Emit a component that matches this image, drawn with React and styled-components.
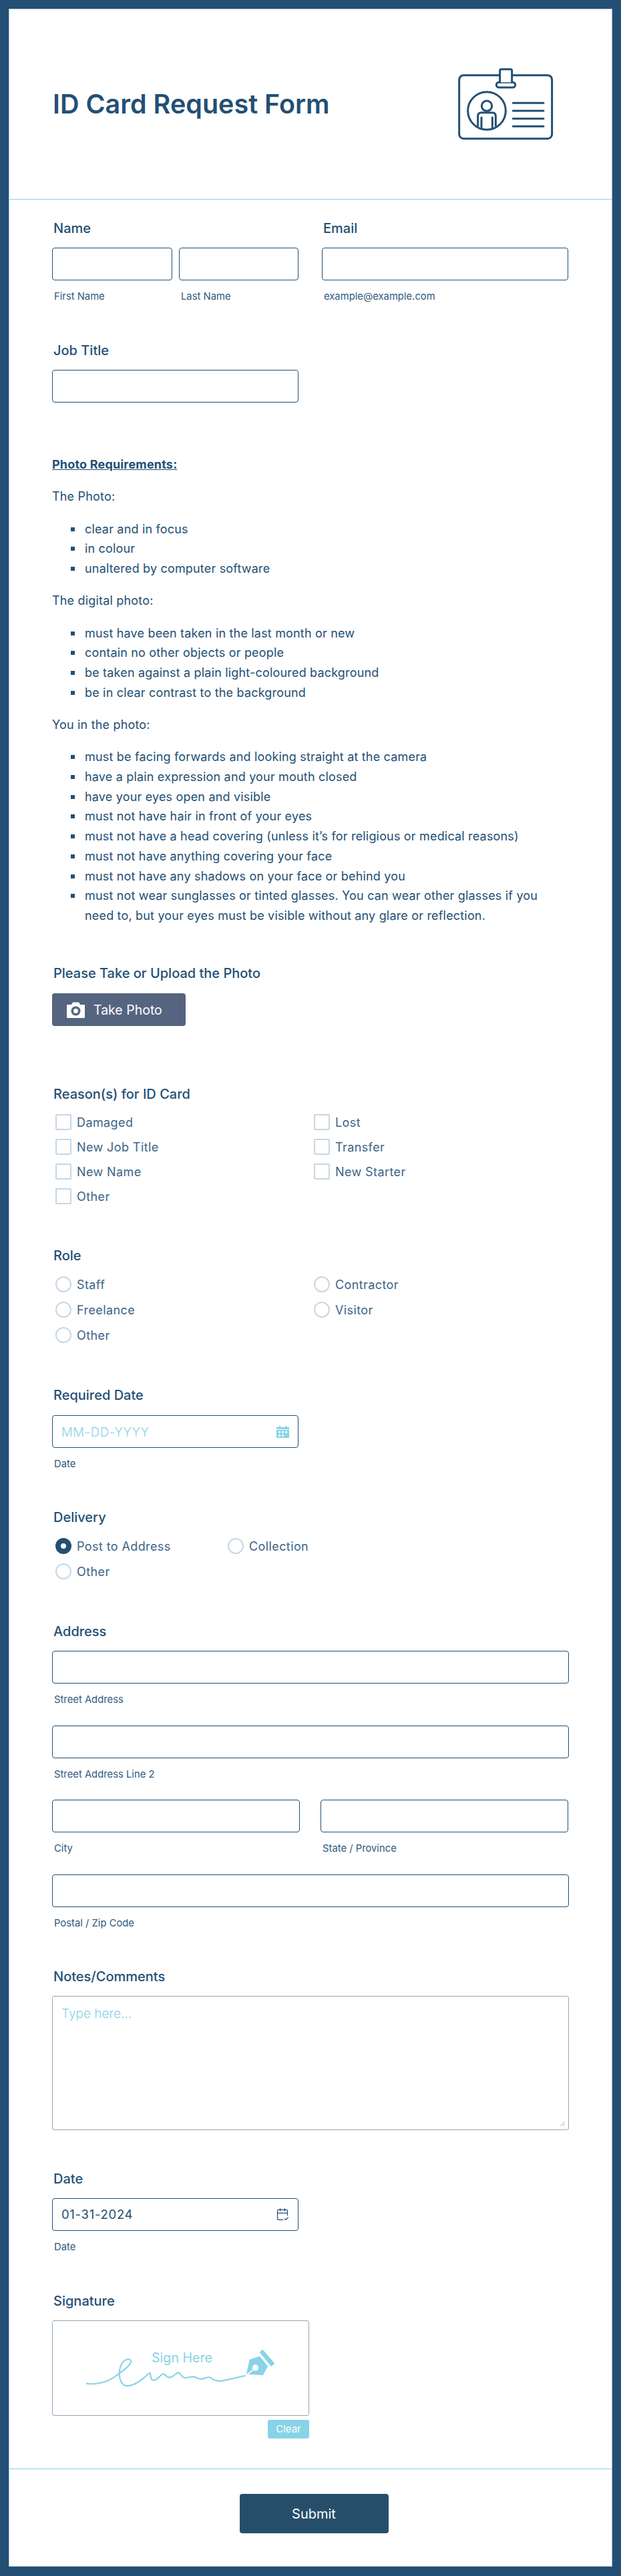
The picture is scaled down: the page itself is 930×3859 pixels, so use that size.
import React from 'react';
import styled, { createGlobalStyle } from 'styled-components';
import { CalendarCheck2 } from 'lucide-react';

const NAVY = '#234f74';
const SKY = '#88d3e7';

const Global = createGlobalStyle`
  html, body { margin: 0; padding: 0; }
  body { background: ${NAVY}; font-family: 'Inter', sans-serif; color: ${NAVY}; }
  * { box-sizing: border-box; }
`;

const Page = styled.div`
  width: 930px;
  height: 3859px;
  padding: 13px 13px 14px;
`;

const Card = styled.main`
  height: 100%;
  background: #fff;
  border: 1px solid #a9c6da;
  display: flex;
  flex-direction: column;
`;

const Header = styled.header`
  height: 285px;
  flex-shrink: 0;
  padding: 0 56px 0 65px;
  display: flex;
  align-items: center;
  justify-content: space-between;
  border-bottom: 1px solid ${SKY};
`;

const Title = styled.h1`
  margin: 0;
  font-size: 39.5px;
  font-weight: 600;
  color: ${NAVY};
`;

const Form = styled.div`
  flex: 1;
  padding: 0 64px;
`;

const Field = styled.section`
  margin-top: ${p => p.$top}px;
  width: ${p => p.$width ? p.$width + 'px' : 'auto'};
`;

const Label = styled.div`
  font-size: 20px;
  font-weight: 500;
  line-height: 22px;
  padding-left: 2px;
  color: ${NAVY};
  margin-bottom: ${p => p.$gap ?? 18}px;
`;

const Row = styled.div`
  display: grid;
  grid-template-columns: ${p => p.$cols};
  column-gap: ${p => p.$gap}px;
`;

const Input = styled.div`
  height: ${p => p.$h ?? 49}px;
  border: 1px solid ${NAVY};
  border-radius: 4px;
  background: #fff;
`;

const Sub = styled.div`
  font-size: 14.8px;
  line-height: 16px;
  margin-top: 16px;
  padding-left: 3px;
  color: #2f5a80;
`;

const StackedAddress = styled.div`
  display: flex;
  flex-direction: column;
  gap: 30.5px;
`;

const Rich = styled.div`
  font-size: 18px;
  line-height: 29.7px;
  letter-spacing: 0.18px;
  color: ${NAVY};
  p { margin: 0 0 18.6px; }
  u { font-weight: 700; }
  ul { margin: 0 0 18.6px; padding: 0 0 0 49px; list-style: none; }
  li { position: relative; }
  li::before {
    content: '';
    position: absolute;
    left: -21px;
    top: 12px;
    width: 6px;
    height: 6px;
    background: ${NAVY};
  }
`;

const PhotoButton = styled.button`
  width: 200px;
  height: 49px;
  border: none;
  border-radius: 4px;
  background: #56657f;
  color: #fff;
  padding: 0 0 0 22px;
  display: flex;
  align-items: center;
  gap: 13px;
  font: 400 19.5px 'Inter', sans-serif;
`;

const Options = styled.div`
  display: grid;
  grid-template-columns: ${p => p.$cols ?? '387px 1fr'};
  row-gap: ${p => p.$rowGap}px;
  padding-left: 5px;
`;

const Option = styled.div`
  display: flex;
  align-items: center;
  gap: 8px;
  height: 24px;
  font-size: 18px;
  letter-spacing: 0.4px;
  color: #3c6488;
`;

const Check = styled.span`
  width: 24px;
  height: 24px;
  border: 2px solid #c8d6e3;
  border-radius: 2px;
  flex-shrink: 0;
`;

const Radio = styled.span`
  width: 24px;
  height: 24px;
  border-radius: 50%;
  border: ${p => p.$on ? `8px solid ${NAVY}` : '2px solid #c8d6e3'};
  flex-shrink: 0;
`;

const DateBox = styled(Input)`
  display: flex;
  align-items: center;
  justify-content: space-between;
  padding: 0 13px;
  font-size: 18.5px;
  letter-spacing: 0.7px;
  color: ${p => p.$placeholder ? SKY : NAVY};
  font-weight: ${p => p.$placeholder ? 300 : 400};
`;

const Textarea = styled.div`
  height: 201px;
  border: 1px dotted ${NAVY};
  border-radius: 4px;
  padding: 14px 13px;
  font-size: 19px;
  font-weight: 300;
  color: ${SKY};
  position: relative;
`;

const Grip = styled.svg`
  position: absolute;
  right: 4px;
  bottom: 4px;
`;

const SignBox = styled.div`
  width: 385px;
  height: 143px;
  border: 1px dotted ${NAVY};
  border-radius: 4px;
  display: flex;
  align-items: center;
  justify-content: center;
`;

const ClearRow = styled.div`
  width: 385px;
  display: flex;
  justify-content: flex-end;
  margin-top: 6px;
`;

const ClearButton = styled.button`
  width: 62px;
  height: 28px;
  border: none;
  border-radius: 3px;
  background: ${SKY};
  color: #fff;
  font: 400 15px 'Inter', sans-serif;
`;

const Footer = styled.footer`
  height: 146px;
  flex-shrink: 0;
  border-top: 1px solid ${SKY};
  padding-top: 37px;
  display: flex;
  justify-content: center;
`;

const Submit = styled.button`
  width: 223px;
  height: 59px;
  border: none;
  border-radius: 4px;
  background: #264e6b;
  color: #fff;
  font: 400 20px 'Inter', sans-serif;
  margin-left: 10px;
`;

function BadgeIcon() {
  return (
    <svg width="200" height="150" viewBox="0 0 600 450" fill="none" stroke={NAVY} strokeWidth="9" strokeLinecap="round" strokeLinejoin="round">
      <path d="M266 95H103a20 20 0 0 0-20 20v245a20 20 0 0 0 20 20h377a20 20 0 0 0 20-20V115a20 20 0 0 0-20-20H320" />
      <rect x="250" y="127" width="85" height="23" rx="11" fill="#fff" />
      <path d="M266 127V74q0-6 6-6h42q6 0 6 6v53" fill="#fff" />
      <circle cx="207" cy="255" r="85" />
      <circle cx="207" cy="233" r="23" />
      <path d="M167 322v-44q0-15 15-15h50q15 0 15 15v44M183 285v46M232 285v46" />
      <path d="M325 220h137M325 255h137M325 290h137M325 325h137" />
    </svg>
  );
}

function CameraIcon() {
  return (
    <svg width="27" height="24" viewBox="0 0 27 24">
      <path d="M1 4h6l2-3.500h9l2 3.500h6a1 1 0 0 1 1 1v18a1 1 0 0 1-1 1H1a1 1 0 0 1-1-1V5a1 1 0 0 1 1-1z" fill="#fff" />
      <circle cx="13.500" cy="13.500" r="7" fill="#56657f" />
      <circle cx="13.500" cy="13.500" r="3.500" fill="#fff" />
    </svg>
  );
}

function CalendarFilled() {
  return (
    <svg width="19" height="18" viewBox="0 0 19 18">
      <path d="M0 2h4V0h2v2h7V0h2v2h4v3H0z" fill={SKY} />
      <path fillRule="evenodd" fill={SKY} d="M0 6h19v12H0zM3 8v3h3V8zM8 8v3h3V8zM13 8v3h3V8zM3 13v3h3v-3zM8 13v3h3v-3z" />
    </svg>
  );
}

function SignatureArt() {
  return (
    <svg width="287" height="59" viewBox="200 175 860 177" fill="none">
      <path
        d="M208 333C240 338 290 332 330 305C365 280 410 250 407 232C403 218 378 222 365 245C350 275 350 320 375 340C400 352 440 330 470 303C480 294 490 282 493 287C497 300 492 318 510 318C530 318 540 288 553 290C565 292 565 310 585 305C600 302 610 282 622 284C632 286 630 306 650 307C670 308 680 297 695 304C705 310 715 316 730 312C745 308 755 300 765 307C780 320 795 325 820 320L920 298"
        stroke={SKY}
        strokeWidth="6.5"
        strokeLinecap="round"
      />
      <path d="M940 225L985 210L1022 255L1000 296L925 291z" fill={SKY} />
      <circle cx="966" cy="262" r="14" fill="#fff" />
      <path d="M924 296L958 270" stroke="#fff" strokeWidth="5" />
      <path d="M984 192L999 180L1053 243L1037 257z" fill={SKY} />
      <text x="636" y="238" textAnchor="middle" fontFamily="Inter, sans-serif" fontSize="59" fill={SKY}>Sign Here</text>
    </svg>
  );
}

function CheckRows({ rows }) {
  return rows.map(t => (
    <Option key={t}><Check />{t}</Option>
  ));
}

function RadioRows({ rows, on }) {
  return rows.map(t => (
    <Option key={t}><Radio $on={t === on} />{t}</Option>
  ));
}

export default function App() {
  return (
    <Page>
      <Global />
      <Card>
        <Header>
          <Title>ID Card Request Form</Title>
          <BadgeIcon />
        </Header>
        <Form>
          <Field $top={32}>
            <Row $cols="369px 369px" $gap={35}>
              <div>
                <Label>Name</Label>
                <Row $cols="180px 179px" $gap={10}>
                  <div><Input /><Sub>First Name</Sub></div>
                  <div><Input /><Sub>Last Name</Sub></div>
                </Row>
              </div>
              <div>
                <Label>Email</Label>
                <Input />
                <Sub>example@example.com</Sub>
              </div>
            </Row>
          </Field>

          <Field $top={62} $width={369}>
            <Label>Job Title</Label>
            <Input />
          </Field>

          <Field $top={78}>
            <Rich>
              <p><u>Photo Requirements:</u></p>
              <p>The Photo:</p>
              <ul>
                <li>clear and in focus</li>
                <li>in colour</li>
                <li>unaltered by computer software</li>
              </ul>
              <p>The digital photo:</p>
              <ul>
                <li>must have been taken in the last month or new</li>
                <li>contain no other objects or people</li>
                <li>be taken against a plain light-coloured background</li>
                <li>be in clear contrast to the background</li>
              </ul>
              <p>You in the photo:</p>
              <ul>
                <li>must be facing forwards and looking straight at the camera</li>
                <li>have a plain expression and your mouth closed</li>
                <li>have your eyes open and visible</li>
                <li>must not have hair in front of your eyes</li>
                <li>must not have a head covering (unless it’s for religious or medical reasons)</li>
                <li>must not have anything covering your face</li>
                <li>must not have any shadows on your face or behind you</li>
                <li>must not wear sunglasses or tinted glasses. You can wear other glasses if you need to, but your eyes must be visible without any glare or reflection.</li>
              </ul>
            </Rich>
          </Field>

          <Field $top={60.4}>
            <Label $gap={19}>Please Take or Upload the Photo</Label>
            <PhotoButton><CameraIcon />Take Photo</PhotoButton>
          </Field>

          <Field $top={91}>
            <Label $gap={19}>Reason(s) for ID Card</Label>
            <Options $rowGap={13}>
              <CheckRows rows={['Damaged', 'Lost', 'New Job Title', 'Transfer', 'New Name', 'New Starter', 'Other']} />
            </Options>
          </Field>

          <Field $top={66}>
            <Label $gap={20}>Role</Label>
            <Options $rowGap={14}>
              <RadioRows rows={['Staff', 'Contractor', 'Freelance', 'Visitor', 'Other']} />
            </Options>
          </Field>

          <Field $top={67} $width={369}>
            <Label $gap={19}>Required Date</Label>
            <DateBox $placeholder>MM-DD-YYYY<CalendarFilled /></DateBox>
            <Sub>Date</Sub>
          </Field>

          <Field $top={61}>
            <Label $gap={20}>Delivery</Label>
            <Options $cols="258px 1fr" $rowGap={14}>
              <RadioRows on="Post to Address" rows={['Post to Address', 'Collection', 'Other']} />
            </Options>
          </Field>

          <Field $top={67}>
            <Label>Address</Label>
            <StackedAddress>
              <div><Input /><Sub>Street Address</Sub></div>
              <div><Input /><Sub>Street Address Line 2</Sub></div>
              <Row $cols="371px 371px" $gap={31}>
                <div><Input /><Sub>City</Sub></div>
                <div><Input /><Sub>State / Province</Sub></div>
              </Row>
              <div><Input /><Sub>Postal / Zip Code</Sub></div>
            </StackedAddress>
          </Field>

          <Field $top={61}>
            <Label>Notes/Comments</Label>
            <Textarea>
              Type here...
              <Grip width="9" height="9" viewBox="0 0 9 9" stroke="#9fb5c8" fill="none">
                <path d="M1 8L8 1M5 8L8 5" />
              </Grip>
            </Textarea>
          </Field>

          <Field $top={62} $width={369}>
            <Label>Date</Label>
            <DateBox>01-31-2024<CalendarCheck2 size={20} strokeWidth={1.5} /></DateBox>
            <Sub>Date</Sub>
          </Field>

          <Field $top={62}>
            <Label>Signature</Label>
            <SignBox><SignatureArt /></SignBox>
            <ClearRow><ClearButton>Clear</ClearButton></ClearRow>
          </Field>
        </Form>
        <Footer>
          <Submit>Submit</Submit>
        </Footer>
      </Card>
    </Page>
  );
}
